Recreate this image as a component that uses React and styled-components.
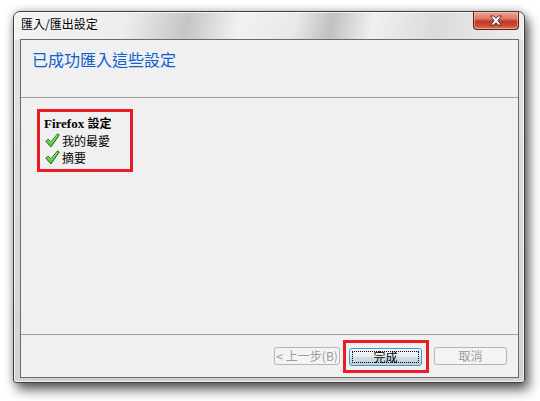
import React from "react";
import styled, { createGlobalStyle } from "styled-components";

const Global = createGlobalStyle`
  html, body { margin: 0; padding: 0; background: #ffffff; }
  body { font-family: "Noto Sans CJK TC", "Liberation Sans", sans-serif; }
`;

const Page = styled.div`
  width: 540px;
  height: 401px;
  padding: 11px 0 0 13px;
  box-sizing: border-box;
  overflow: hidden;
`;

const Window = styled.div`
  position: relative;
  width: 512px;
  height: 372px;
  box-sizing: border-box;
  border: 1px solid #3f3f3f;
  border-radius: 7px 7px 3px 3px;
  padding: 0 5px 4px 6px;
  display: flex;
  flex-direction: column;
  background:
    linear-gradient(102deg,
      rgba(255,255,255,0.55) 0%,
      rgba(255,255,255,0.35) 22%,
      rgba(160,160,160,0.45) 34%,
      rgba(255,255,255,0.5) 44%,
      rgba(255,255,255,0.2) 55%,
      rgba(150,150,150,0.45) 62%,
      rgba(255,255,255,0.45) 70%,
      rgba(200,200,200,0.3) 82%,
      rgba(255,255,255,0.4) 100%) top / 100% 28px no-repeat,
    linear-gradient(180deg, #e4e4e4 0%, #d2d2d2 100%);
  box-shadow:
    inset 0 0 0 1px rgba(255,255,255,0.7),
    4px 7px 12px rgba(0,0,0,0.6),
    0 0 8px rgba(0,0,0,0.25);
`;

const TitleBar = styled.div`
  height: 27px;
  display: flex;
  align-items: flex-start;
  padding-left: 1px;
`;

const Title = styled.span`
  font-size: 12px;
  line-height: 14px;
  margin-top: 5px;
  color: #000;
  text-shadow: 0 0 6px rgba(255,255,255,0.9);
`;

const CloseButton = styled.div`
  margin-left: auto;
  width: 46px;
  height: 18px;
  box-sizing: border-box;
  border: 1px solid #5a2218;
  border-top: none;
  border-radius: 0 0 4px 4px;
  background: linear-gradient(180deg, #e9a896 0%, #d97a66 40%, #c2381e 55%, #cc4a30 80%, #e07a5e 100%);
  display: flex;
  align-items: center;
  justify-content: center;
  box-shadow: inset 0 0 0 1px rgba(255,220,210,0.45);
`;

const Client = styled.div`
  flex: 1;
  border: 1px solid #6a6a6a;
  background: #f0f0f0;
  display: flex;
  flex-direction: column;
`;

const Header = styled.div`
  height: 58px;
  box-sizing: border-box;
  padding: 9px 0 0 11px;
  border-bottom: 1px solid #a0a0a0;
`;

const MainInstruction = styled.div`
  font-size: 16px;
  line-height: 20px;
  color: #0f5fcf;
`;

const Content = styled.div`
  flex: 1;
  padding: 11px 0 0 16px;
`;

const Highlight = styled.div`
  width: 96px;
  box-sizing: border-box;
  border: 3px solid #ea1c24;
  padding: 3px 0 3px 4px;
`;

const GroupTitle = styled.div`
  font-family: "Liberation Serif", "Noto Sans CJK TC", serif;
  font-weight: bold;
  font-size: 13px;
  line-height: 16px;
  color: #000;
  span { font-family: "Noto Sans CJK TC", sans-serif; font-size: 12px; }
`;

const Item = styled.div`
  display: flex;
  align-items: center;
  gap: 2px;
  font-size: 12px;
  line-height: 17px;
  color: #000;
  padding-left: 1px;
`;

const Footer = styled.div`
  height: 43px;
  box-sizing: border-box;
  border-top: 1px solid #a0a0a0;
  display: flex;
  align-items: center;
  justify-content: flex-end;
  padding-right: 11px;
`;

const Button = styled.div`
  width: ${(p) => p.$w}px;
  height: 18px;
  box-sizing: border-box;
  border: 1px solid ${(p) => (p.$disabled ? "#b3b6b8" : p.$default ? "#3a9ad6" : "#707070")};
  border-radius: 3px;
  display: flex;
  align-items: center;
  justify-content: center;
  gap: 3px;
  font-size: 12px;
  line-height: 14px;
  color: ${(p) => (p.$disabled ? "#9c9c9c" : "#000")};
  background: ${(p) =>
    p.$disabled
      ? "#f4f4f4"
      : "linear-gradient(180deg, #f4f8fb 0%, #e6edf2 48%, #d2dde5 52%, #bfcfdb 100%)"};
  position: relative;
  ${(p) =>
    p.$default &&
    `&::after {
      content: "";
      position: absolute;
      inset: 2px;
      border: 1px dotted #000;
    }`}
`;

const FinishFrame = styled.div`
  border: 3px solid #ea1c24;
  padding: 5px 4px 4px 3px;
  margin: 0 5px 0 3px;
`;

const Check = () => (
  <svg width="15" height="15" viewBox="0 0 15 15">
    <path
      d="M0.8 8.2 L3.2 6.2 L5.6 9.2 L12.6 0.8 L14.3 2 L5.9 14 Z"
      fill="#4fcf3c"
      stroke="#1d5a16"
      strokeWidth="0.9"
      strokeLinejoin="round"
    />
    <path d="M2 8.2 L3.2 7.3 L5.7 10.3 L12.7 1.9" fill="none" stroke="#b4f0a4" strokeWidth="0.7" />
  </svg>
);

const CloseX = () => (
  <svg width="14" height="11" viewBox="0 0 14 11">
    <path
      d="M1.5 1 H5 L7 3.4 L9 1 H12.5 L8.8 5.5 L12.5 10 H9 L7 7.6 L5 10 H1.5 L5.2 5.5 Z"
      fill="#ffffff"
      stroke="#4a2a26"
      strokeWidth="0.9"
      strokeLinejoin="round"
    />
  </svg>
);

export default function App() {
  return (
    <>
      <Global />
      <Page>
        <Window>
          <TitleBar>
            <Title>匯入/匯出設定</Title>
            <CloseButton>
              <CloseX />
            </CloseButton>
          </TitleBar>
          <Client>
            <Header>
              <MainInstruction>已成功匯入這些設定</MainInstruction>
            </Header>
            <Content>
              <Highlight>
                <GroupTitle>
                  Firefox <span>設定</span>
                </GroupTitle>
                <Item>
                  <Check />
                  我的最愛
                </Item>
                <Item>
                  <Check />
                  摘要
                </Item>
              </Highlight>
            </Content>
            <Footer>
              <Button $w={66} $disabled>
                <span>&lt;</span>
                <span>上一步(B)</span>
              </Button>
              <FinishFrame>
                <Button $w={73} $default>
                  完成
                </Button>
              </FinishFrame>
              <Button $w={73} $disabled>
                取消
              </Button>
            </Footer>
          </Client>
        </Window>
      </Page>
    </>
  );
}
